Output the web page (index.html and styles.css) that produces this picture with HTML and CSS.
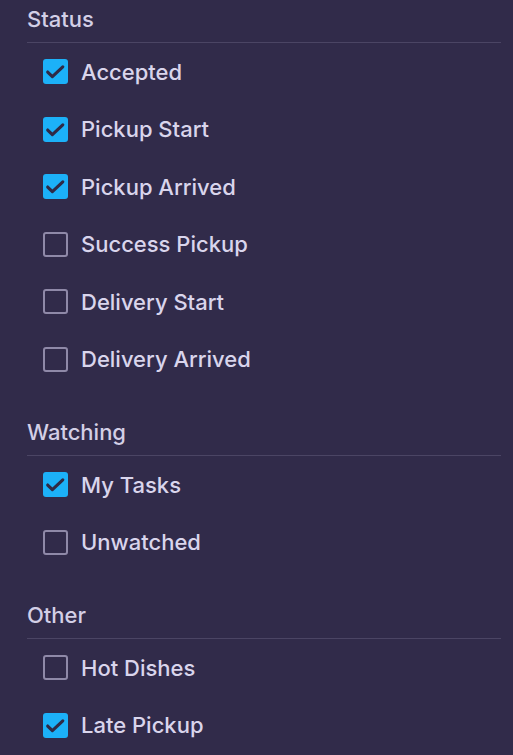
FILE: index.html
```html
<!DOCTYPE html>
<html>
<head>
<meta charset="utf-8">
<link rel="stylesheet" href="styles.css">
</head>
<body>
<div class="panel">
  <section class="group">
    <h2 class="group-title">Status</h2>
    <ul class="options">
      <li class="option"><span class="box checked"><svg viewBox="0 0 24 24"><path d="M4.5 12.5L9 17l10-9.5"/></svg></span><span class="label">Accepted</span></li>
      <li class="option"><span class="box checked"><svg viewBox="0 0 24 24"><path d="M4.5 12.5L9 17l10-9.5"/></svg></span><span class="label">Pickup Start</span></li>
      <li class="option"><span class="box checked"><svg viewBox="0 0 24 24"><path d="M4.5 12.5L9 17l10-9.5"/></svg></span><span class="label">Pickup Arrived</span></li>
      <li class="option"><span class="box"></span><span class="label">Success Pickup</span></li>
      <li class="option"><span class="box"></span><span class="label">Delivery Start</span></li>
      <li class="option"><span class="box"></span><span class="label">Delivery Arrived</span></li>
    </ul>
  </section>
  <section class="group">
    <h2 class="group-title">Watching</h2>
    <ul class="options">
      <li class="option"><span class="box checked"><svg viewBox="0 0 24 24"><path d="M4.5 12.5L9 17l10-9.5"/></svg></span><span class="label">My Tasks</span></li>
      <li class="option"><span class="box"></span><span class="label">Unwatched</span></li>
    </ul>
  </section>
  <section class="group">
    <h2 class="group-title">Other</h2>
    <ul class="options">
      <li class="option"><span class="box"></span><span class="label">Hot Dishes</span></li>
      <li class="option"><span class="box checked"><svg viewBox="0 0 24 24"><path d="M4.5 12.5L9 17l10-9.5"/></svg></span><span class="label">Late Pickup</span></li>
    </ul>
  </section>
</div>
</body>
</html>
```

FILE: styles.css
```css
html, body {
  margin: 0;
  padding: 0;
  background: #312b4a;
}
body {
  font-family: Inter, "Noto Sans", sans-serif;
  color: #d9d5ec;
}
.panel {
  padding: 6px 12px 0 27px;
  display: flex;
  flex-direction: column;
  gap: 31px;
}
.group-title {
  margin: 0;
  font-size: 22px;
  font-weight: 500;
  line-height: 26px;
  padding-bottom: 10px;
  border-bottom: 1px solid #4b4564;
  color: #d3cfe6;
}
.options {
  list-style: none;
  margin: 0;
  padding: 0;
}
.option {
  height: 57.5px;
  display: flex;
  align-items: center;
  gap: 13px;
  padding-left: 16px;
  font-size: 22px;
  font-weight: 500;
}
.box {
  width: 25px;
  height: 25px;
  box-sizing: border-box;
  border: 2px solid #8f89a8;
  border-radius: 3px;
  flex: none;
  display: flex;
}
.box.checked {
  background: #1cb1f8;
  border: 0;
}
.box svg {
  width: 100%;
  height: 100%;
  fill: none;
  stroke: #2f2a46;
  stroke-width: 3;
  stroke-linecap: round;
  stroke-linejoin: round;
}
```
